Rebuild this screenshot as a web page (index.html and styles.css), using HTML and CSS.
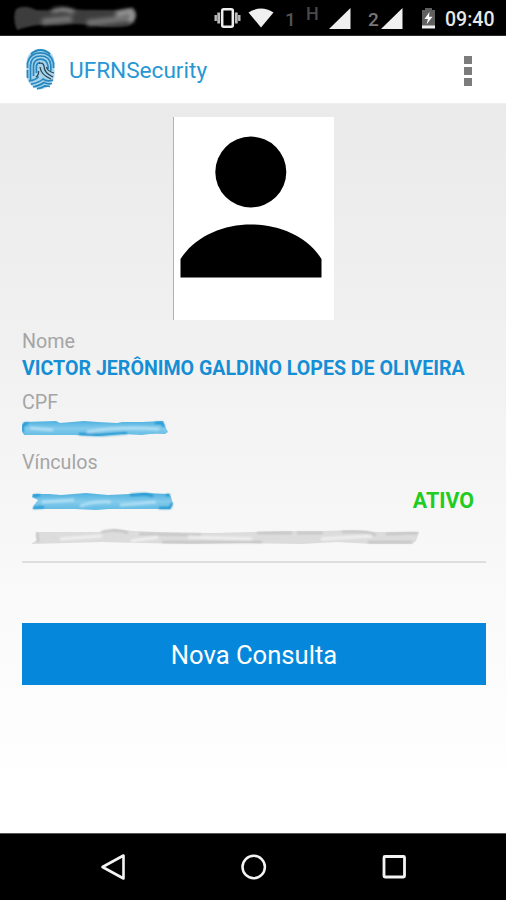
FILE: index.html
```html
<!DOCTYPE html>
<html lang="pt-BR">
<head>
<meta charset="utf-8">
<title>UFRNSecurity</title>
<link rel="stylesheet" href="styles.css">
</head>
<body>
<div class="phone">
  <header class="status">
    <svg class="smudge" width="130" height="28" viewBox="0 0 130 28">
      <defs>
        <filter id="soft" x="-10%" y="-30%" width="120%" height="160%"><feGaussianBlur stdDeviation="1.2"/></filter>
        <filter id="wide" x="-10%" y="-80%" width="120%" height="260%"><feGaussianBlur stdDeviation="2.2"/></filter>
      </defs>
      <path d="M3 5Q12 0 23 6Q42 7 50 4Q64 6 81 6L105 6L120 4Q126 10 120 18L116 22Q95 25 78 21Q59 19 47 21L25 21Q12 23 4 26Q-1 13 3 5Z" fill="#3c3c3c" filter="url(#soft)"/>
      <g filter="url(#wide)" fill="none">
        <path d="M39 7Q51 3 61 8" stroke="#aaa" stroke-width="3"/>
        <path d="M29 18Q41 16 59 15M74 19L92 17L117 14" stroke="#777" stroke-width="6"/>
        <path d="M103 10L118 7Q122 12 117 18" stroke="#aaa" stroke-width="4"/>
      </g>
    </svg>
    <svg class="vibrate" width="28" height="22" viewBox="0 0 28 22">
      <rect x="8.2" y="2.2" width="10.600" height="17.600" rx="1.5" fill="none" stroke="#eee" stroke-width="2.500"/>
      <path d="M4.700 5.500V16.500M22.300 5.500V16.500" stroke="#bbb" stroke-width="2.800"/>
      <path d="M1.700 8V14M25.300 8V14" stroke="#bbb" stroke-width="2.400"/>
    </svg>
    <svg class="wifi" width="26" height="20" viewBox="0 0 26 20"><path d="M.5 4.500Q13-3.500 25.500 4.500L13 19.500Z" fill="#f0f0f0"/></svg>
    <span class="sim sim-one">1</span>
    <span class="network">H</span>
    <svg class="signal-one" width="22" height="21" viewBox="0 0 22 21"><path d="M0 21L21.500 0V21Z" fill="#f0f0f0"/></svg>
    <span class="sim sim-two">2</span>
    <svg class="signal-two" width="22" height="21" viewBox="0 0 22 21"><path d="M0 21L21.500 0V21Z" fill="#f0f0f0"/></svg>
    <svg class="battery" width="15" height="21" viewBox="0 0 15 21">
      <path d="M1 2H4V0H11V2H14V18H1Z" fill="#606060"/>
      <path d="M1 17.500H14V20.500H1Z" fill="#f0f0f0"/>
      <path d="M8.500 4L3.500 11H7L5.500 16.500L11.500 8.800H8Z" fill="#fff"/>
    </svg>
    <time class="clock">09:40</time>
  </header>

  <div class="toolbar">
    <svg class="logo" width="30" height="42" viewBox="0 0 30 42">
      <g fill="none" stroke="#2787bd" stroke-width="1.700">
        <path d="M14.500 0C6 0 .5 6 .5 14V27Q2 38 14.500 40.500Q27 38 28.500 27V14C28.500 6 23 0 14.500 0Z" fill="#a5d4ec" stroke="none"/>
        <path d="M5 5Q14.500-3 24 5M1.500 19V14Q4 3.800 14.500 3.800Q25 3.800 27.500 14V19M1.500 29V21M4.500 32V16Q5 7 14.500 7Q24 7 24.800 16V22M7.500 27V17Q8 10.200 14.500 10.200Q21 10.200 22 17V20M10.400 24V17Q11 13.500 14 13.500"/>
        <path d="M3 32Q10 31 12.500 27.500M5 35.200Q14 33.200 17 30Q21 33 27 31M7 38Q14 36.500 18 33.500Q22 35.500 26 34.500M11 39.800Q16 39 19 36.800L24 37.500"/>
        <path d="M13 14.500Q17 13 18 17Q18 24 27 28M14 18Q15 26 25 30M20.500 18Q21 22 28 24M10 28Q13 26 12.500 22" stroke="#2c4352" stroke-width="1.300"/>
      </g>
    </svg>
    <h1 class="title">UFRNSecurity</h1>
    <div class="menu"><i></i><i></i><i></i></div>
  </div>

  <main class="content">
    <svg class="avatar" width="161" height="203" viewBox="0 0 161 203">
      <rect width="161" height="203" fill="#fff"/>
      <path d="M.5 0V203" stroke="#b2b2b2"/>
      <circle cx="77.800" cy="55" r="35.500"/>
      <path d="M7.500 160.500V142C37 96 119 96 148.500 142V160.500Z"/>
    </svg>

    <div class="label nome">Nome</div>
    <div class="name">VICTOR JERÔNIMO GALDINO LOPES DE OLIVEIRA</div>
    <div class="label cpf">CPF</div>
    <svg class="cpf-mark" width="150" height="20" viewBox="0 0 150 20">
      <defs>
        <filter id="slight" x="-5%" y="-20%" width="110%" height="140%"><feGaussianBlur stdDeviation=".6"/></filter>
        <filter id="streak" x="-5%" y="-80%" width="110%" height="260%"><feGaussianBlur stdDeviation="1.3"/></filter>
        <linearGradient id="paint" x1="0" y1="0" x2="0" y2="1"><stop offset="0" stop-color="#4fb2e0"/><stop offset=".5" stop-color="#83caec"/><stop offset="1" stop-color="#62bbe3"/></linearGradient>
      </defs>
      <path d="M2 2L34 1L38 3L62 1L76 2L95 3L100 2L120 2L141 1L143 6L146 12L143 14Q132 13 120 15L99 14L75 16L52 15L2 15L0 11V6Z" fill="url(#paint)" filter="url(#slight)"/>
      <g filter="url(#streak)" fill="none">
        <path d="M8 8L31 10M65 12Q96 6 137 9" stroke="#b1dff4" stroke-width="3"/>
        <path d="M1 12V5L6 3M57 14L79 15L105 13M133 3H140L142 7" stroke="#1590cd" stroke-width="2"/>
      </g>
    </svg>
    <div class="label vinculos">Vínculos</div>
    <section class="link">
      <div class="link-head">
        <svg width="142" height="20" viewBox="0 0 142 20">
          <path d="M1 3H17L29 4L54 2L76 4L98 3L112 2L137 3L139 6L141 13L138 18L101 18L77 18L64 19L43 18L1 18L2 14L6 9L0 6Z" fill="url(#paint)" filter="url(#slight)"/>
          <g filter="url(#streak)" fill="none">
            <path d="M10 11L42 9M48 15Q63 10 79 11M88 14L124 11" stroke="#b0dff5" stroke-width="3"/>
            <path d="M1 5L8 4M1 17L12 16M98 4L114 3L121 5M134 4H138M127 17H138L140 12" stroke="#1590cd" stroke-width="2"/>
          </g>
        </svg>
        <strong class="active">ATIVO</strong>
      </div>
      <svg class="gray-mark" width="396" height="22" viewBox="0 0 396 22">
        <path d="M4 5L68 5L82 2L102 4L126 5L180 6L220 5L250 4L290 4L322 3L345 5L387 5L384 14L380 17L340 17L305 15L270 17L210 16L160 17L107 16L70 15L-1 17L5 13Z" fill="#dcdcdc" filter="url(#slight)"/>
        <g filter="url(#streak)" fill="none">
          <path d="M5 6L6 15M69 5Q84 1 96 6M107 7L169 8M225 6L260 6M265 6L291 6M310 5L334 5L344 8M354 7L386 6M130 15H230M336 15H380" stroke="#b8b8b8" stroke-width="1.500"/>
          <path d="M28 12L70 9M99 14L126 10M156 10L220 12M289 12L340 9" stroke="#f0f0f0" stroke-width="3"/>
        </g>
      </svg>
    </section>
    <button class="query">Nova Consulta</button>
  </main>

  <nav class="nav">
    <svg width="28" height="30" viewBox="0 0 28 30"><path d="M3.500 15L24.500 3.500V26.500Z" fill="none" stroke="#f4f4f4" stroke-width="2.600" stroke-linejoin="round"/></svg>
    <svg width="28" height="30" viewBox="0 0 28 30"><circle cx="13.700" cy="15" r="11.200" fill="none" stroke="#f4f4f4" stroke-width="2.500"/></svg>
    <svg width="28" height="30" viewBox="0 0 28 30"><rect x="4" y="4.500" width="20.500" height="20.500" rx="1" fill="none" stroke="#f4f4f4" stroke-width="2.800"/></svg>
  </nav>
</div>
</body>
</html>
```

FILE: styles.css
```css
* { box-sizing: border-box; }
body { margin: 0; font-family: Roboto, "Liberation Sans", sans-serif; }
svg { display: block; flex: none; }
.phone { width: 506px; height: 900px; display: flex; flex-direction: column; overflow: hidden; }

.status { height: 36px; flex: none; display: flex; align-items: flex-start; background: #000; border-bottom: 1px solid #2b2b2b; white-space: nowrap; }
.smudge { margin: 4px 0 0 13px; }
.vibrate { margin: 7px 0 0 71px; }
.wifi { margin: 8px 0 0 6px; }
.sim { width: 12px; margin-top: 8px; font-size: 19px; line-height: 24px; font-weight: 500; color: #555; }
.sim-one { margin-left: 11px; }
.network { width: 14px; margin: 3px 0 0 9px; font-size: 18px; line-height: 22px; font-weight: 500; color: #4a4a4a; }
.signal-one { margin: 8px 0 0 9px; }
.sim-two { margin-left: 17px; color: #777; }
.signal-two { margin: 8px 0 0 1px; }
.battery { margin: 8px 0 0 18px; }
.clock { margin: 8px 0 0 9px; font-size: 19.500px; line-height: 24px; font-weight: 500; color: #e8e8e8; }

.toolbar { height: 67px; flex: none; display: flex; align-items: center; padding: 0 34px 0 26px; background: #fff; }
.logo { margin-top: 1px; }
.title { margin: 2px 0 0 13px; font-size: 22.600px; font-weight: 400; line-height: 30px; color: #2797d3; }
.menu { margin: 3px 0 0 auto; display: grid; gap: 3px; }
.menu i { width: 8px; height: 8px; background: #7c7c7c; }

.content { flex: 1; display: flex; flex-direction: column; padding: 14px 20px 0 22px; border-top: 1px solid #efefef; background: linear-gradient(#eaeaea, #f0f0f0 29%, #f5f5f5 50%, #fafafa 70%, #fff 95%); }
.avatar { margin: -1px 0 0 151px; }
.label { height: 24px; font-size: 19.700px; line-height: 26px; color: #a5a5a5; }
.nome { margin-top: 9px; }
.name { height: 30px; font-size: 19.600px; line-height: 32px; font-weight: 700; color: #148ed4; white-space: nowrap; }
.cpf { margin-top: 7px; }
.cpf-mark { margin-top: 6px; }
.vinculos { margin-top: 10px; }
.link { height: 89px; padding: 11px 12px 0 10px; border-bottom: 2px solid #dedede; }
.link-head { height: 32px; display: flex; align-items: center; justify-content: space-between; }
.active { font-size: 21.400px; line-height: 32px; color: #20cc20; }
.gray-mark { margin-top: 10px; }
.query { height: 62px; flex: none; margin-top: 60px; padding: 0; border: 0; background: #0588dc; color: #fff; font: 400 25.600px/64px Roboto, "Liberation Sans", sans-serif; }

.nav { height: 67px; flex: none; display: flex; justify-content: space-between; padding: 18px 98px 0 99px; background: #000; border-top: 1px solid #555; }
```
